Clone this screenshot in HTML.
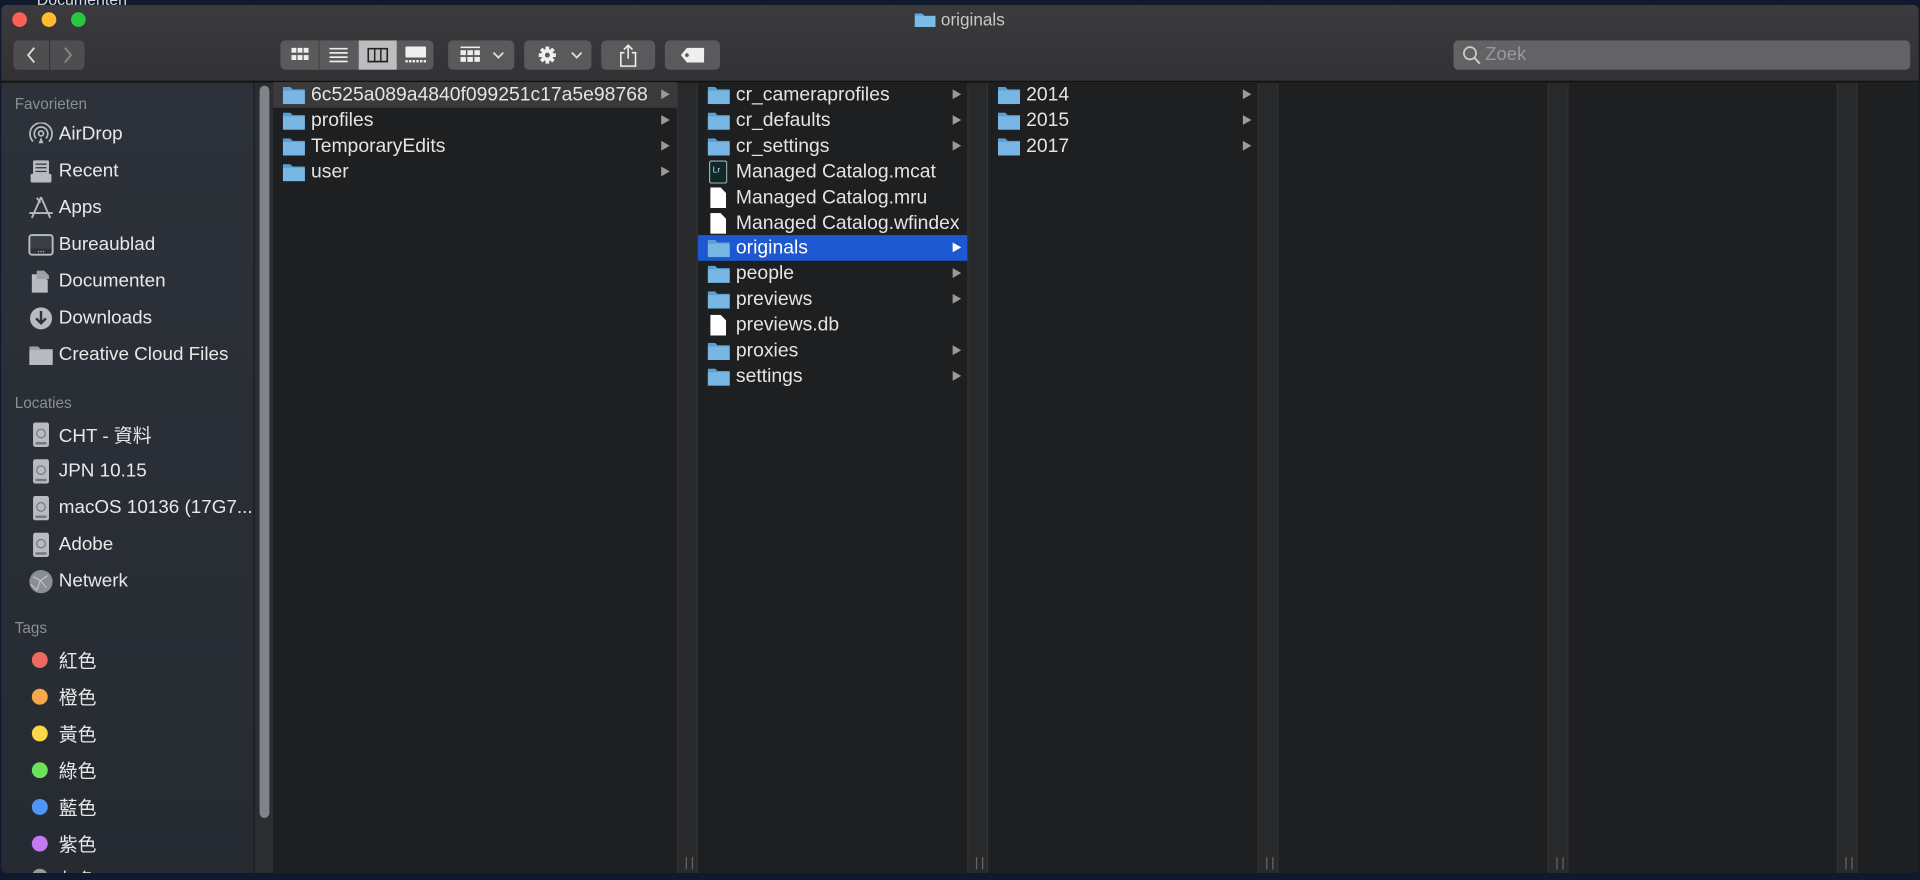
<!DOCTYPE html>
<html><head><meta charset="utf-8"><style>
*{margin:0;padding:0;box-sizing:border-box}
html,body{width:1920px;height:880px;overflow:hidden;background:#0f1a2e}
#w{position:absolute;left:0;top:0;width:1568px;height:719px;transform:scale(1.22449);transform-origin:0 0;font-family:"Liberation Sans","Noto Sans CJK TC",sans-serif;color:#dcdcdc}
.win{position:absolute;left:1px;top:4px;width:1566px;height:709px;background:#1e1f21;border-radius:5px;overflow:hidden}
.tb{position:absolute;left:0;top:0;width:100%;height:63px;background:linear-gradient(#3b3b3d,#323234);border-bottom:1px solid #111}
.tl{position:absolute;top:6px;width:12px;height:12px;border-radius:50%}
.title{position:absolute;left:0;right:0;top:4px;text-align:center;font-size:14px;color:#c8c8c8}
.btn{position:absolute;top:29px;height:24px;background:#5a5a5d;border-radius:4px}
.seg{position:absolute;top:0;height:24px}
.side{position:absolute;left:0;top:64px;width:207px;height:650px;background:linear-gradient(#2d323a,#262a31)}
.sh{position:absolute;left:11px;font-size:12.5px;color:#8a8e95}
.si{position:absolute;left:47px;font-size:15.4px;color:#e8e8e8;white-space:nowrap;transform:translateY(-50%)}
.ic{position:absolute;left:22px;width:21px;height:20px;transform:translateY(-50%)}
.dot{position:absolute;left:25px;width:13px;height:13px;border-radius:50%;transform:translateY(-50%)}
.sb{position:absolute;left:206px;top:64px;width:17px;height:650px;background:#2b2d31;border-left:1px solid #1a1a1a}
.thumb{position:absolute;left:4px;top:2px;width:8px;height:598px;border-radius:4px;background:#80848a}
.col{position:absolute;top:64px;height:650px;background:#1e1f21}
.gut{position:absolute;top:64px;height:650px;background:#28292b;border-left:1px solid #333;border-right:1px solid #333}
.gut:after{content:"";position:absolute;left:6px;bottom:8px;width:4px;height:10px;border-left:1px solid #666;border-right:1px solid #666}
.row{position:absolute;left:0;right:0;height:21px;font-size:15.8px;line-height:21px;color:#e4e4e4;white-space:nowrap}
.row .f{position:absolute;left:8px;top:4px;width:18px;height:14px}
.row .t{position:absolute;left:31px}
.row .a{position:absolute;right:6px;top:6px;width:0;height:0;border-left:7px solid #9a9a9a;border-top:4.5px solid transparent;border-bottom:4.5px solid transparent}
.doc{position:absolute;left:10px;top:2px;width:13px;height:17px;background:#fff;clip-path:polygon(0 0,65% 0,100% 28%,100% 100%,0 100%)}
.rows{position:absolute;left:0;right:0;top:-4px}
</style></head><body><div id="w">
<div style="position:absolute;left:30px;top:-8px;font-size:13px;color:#ddd">Documenten</div>
<div class="win">
<div class="tb">
<div class="tl" style="left:9px;background:#fe5f57"></div>
<div class="tl" style="left:33px;background:#febc2e"></div>
<div class="tl" style="left:57px;background:#28c840"></div>
<div class="title"><svg width="17" height="13" style="vertical-align:-1px;margin-right:4px"><path d="M0 2h6l2 2h9v9H0z" fill="#5fa8de"/><rect x="0" y="4" width="17" height="9" fill="#7bbbe8"/></svg>originals</div>
<div class="btn" style="left:10px;width:58px;background:#4e4e51"><div style="position:absolute;left:29px;top:0;width:1px;height:24px;background:#333"></div>
<svg style="position:absolute;left:9px;top:5px" width="12" height="14"><path d="M8 1 3 7l5 6" stroke="#ddd" stroke-width="1.5" fill="none"/></svg>
<svg style="position:absolute;left:38px;top:5px" width="12" height="14"><path d="M4 1l5 6-5 6" stroke="#888" stroke-width="1.5" fill="none"/></svg></div>
<div class="btn" style="left:228px;width:125px;overflow:hidden">
<div class="seg" style="left:64px;width:31px;background:#bdbdbf"></div>
<div class="seg" style="left:31px;width:1px;background:#444"></div>
<svg style="position:absolute;left:9px;top:6px" width="14" height="12" fill="#eee"><rect x="0" y="0" width="4" height="4"/><rect x="5" y="0" width="4" height="4"/><rect x="10" y="0" width="4" height="4"/><rect x="0" y="6" width="4" height="4"/><rect x="5" y="6" width="4" height="4"/><rect x="10" y="6" width="4" height="4"/></svg>
<svg style="position:absolute;left:40px;top:6px" width="15" height="12" fill="#eee"><rect y="0" width="15" height="1.4"/><rect y="3.5" width="15" height="1.4"/><rect y="7" width="15" height="1.4"/><rect y="10.5" width="15" height="1.4"/></svg>
<svg style="position:absolute;left:71px;top:6px" width="17" height="12"><rect x=".7" y=".7" width="15.6" height="10.6" fill="none" stroke="#222" stroke-width="1.4"/><path d="M6 1v10M11 1v10" stroke="#222" stroke-width="1.2"/></svg>
<svg style="position:absolute;left:102px;top:5px" width="17" height="14" fill="#eee"><rect width="17" height="9" rx="1"/><rect y="11" width="2" height="2"/><rect x="3" y="11" width="2" height="2"/><rect x="6" y="11" width="2" height="2"/><rect x="9" y="11" width="2" height="2"/><rect x="12" y="11" width="2" height="2"/><rect x="15" y="11" width="2" height="2"/></svg></div>
<div class="btn" style="left:365px;width:54px">
<svg style="position:absolute;left:10px;top:5px" width="16" height="14" fill="#eee"><rect width="16" height="1.3"/><rect y="3" width="4.5" height="4"/><rect x="5.7" y="3" width="4.5" height="4"/><rect x="11.4" y="3" width="4.5" height="4"/><rect y="8.5" width="4.5" height="4"/><rect x="5.7" y="8.5" width="4.5" height="4"/><rect x="11.4" y="8.5" width="4.5" height="4"/></svg>
<svg style="position:absolute;left:36px;top:9px" width="10" height="7"><path d="M1 1l4 4 4-4" stroke="#ddd" stroke-width="1.5" fill="none"/></svg></div>
<div class="btn" style="left:427px;width:55px">
<svg style="position:absolute;left:11px;top:4px" width="16" height="16"><g fill="#eee"><circle cx="8" cy="8" r="5"/><g stroke="#eee" stroke-width="3"><path d="M8 1v14M1 8h14M3 3l10 10M13 3 3 13"/></g></g><circle cx="8" cy="8" r="2" fill="#5a5a5d"/></svg>
<svg style="position:absolute;left:38px;top:9px" width="10" height="7"><path d="M1 1l4 4 4-4" stroke="#ddd" stroke-width="1.5" fill="none"/></svg></div>
<div class="btn" style="left:490px;width:44px">
<svg style="position:absolute;left:14px;top:3px" width="16" height="19"><path d="M5 7H2v11h12V7h-3M8 12V1M4.5 4.5 8 1l3.5 3.5" stroke="#eee" stroke-width="1.3" fill="none"/></svg></div>
<div class="btn" style="left:542px;width:45px">
<svg style="position:absolute;left:13px;top:6px" width="20" height="12"><path d="M5 0h14v12H5L0 6z" fill="#eee"/><circle cx="5" cy="6" r="1.5" fill="#5a5a5d"/></svg></div>
<div class="btn" style="left:1186px;width:373px;background:#636366">
<svg style="position:absolute;left:7px;top:4px" width="16" height="17"><circle cx="6.5" cy="6.5" r="5" stroke="#ccc" stroke-width="1.4" fill="none"/><path d="M10 10l4.5 5" stroke="#ccc" stroke-width="1.6"/></svg>
<span style="position:absolute;left:26px;top:3px;font-size:15px;color:#9a9a9d">Zoek</span></div>
</div>

<div class="side">
<div class="sh" style="top:10px">Favorieten</div>
<svg class="ic" style="top:42px" viewBox="0 0 21 20"><g fill="none" stroke="#b8bcc2" stroke-width="1.4"><circle cx="10.5" cy="9" r="2"/><path d="M6.5 13a5.5 5.5 0 1 1 8 0M4 15.5a9 9 0 1 1 13 0"/></g><path d="M8.5 17l2-5 2 5z" fill="#b8bcc2"/></svg>
<div class="si" style="top:42px">AirDrop</div>
<svg class="ic" style="top:72px" viewBox="0 0 21 20"><rect x="4" y="1" width="13" height="13" rx="1" fill="#b8bcc2"/><path d="M6 4h9M6 7h9M6 10h9" stroke="#333" stroke-width="1"/><rect x="2" y="12" width="17" height="7" rx="1" fill="#b8bcc2"/></svg>
<div class="si" style="top:72px">Recent</div>
<svg class="ic" style="top:102px" viewBox="0 0 21 20"><path d="M10.5 1 3 18M10.5 1l7.5 17M1 14h19M7 1.5l3 4" stroke="#b8bcc2" stroke-width="1.5" fill="none"/></svg>
<div class="si" style="top:102px">Apps</div>
<svg class="ic" style="top:132px" viewBox="0 0 21 20"><rect x="1" y="2" width="19" height="16" rx="2" fill="none" stroke="#b8bcc2" stroke-width="1.6"/><rect x="2" y="3" width="17" height="10" fill="#3a3f47"/><path d="M8 15.5h1M10 15.5h1M12 15.5h1" stroke="#b8bcc2"/></svg>
<div class="si" style="top:132px">Bureaublad</div>
<svg class="ic" style="top:162px" viewBox="0 0 21 20"><path d="M3 4h8l5 5v10H3z" fill="#b8bcc2"/><path d="M7 1h6l4 4v3H7z" fill="#9da1a8"/></svg>
<div class="si" style="top:162px">Documenten</div>
<svg class="ic" style="top:192px" viewBox="0 0 21 20"><circle cx="10.5" cy="10" r="9" fill="#b8bcc2"/><path d="M10.5 4v10M6.5 10l4 4 4-4" stroke="#333" stroke-width="2" fill="none"/></svg>
<div class="si" style="top:192px">Downloads</div>
<svg class="ic" style="top:222px" viewBox="0 0 21 20"><path d="M1 3h7l2 2h10v13H1z" fill="#9da1a8"/><rect x="1" y="6" width="19" height="12" fill="#b8bcc2"/></svg>
<div class="si" style="top:222px">Creative Cloud Files</div>
<div class="sh" style="top:254px">Locaties</div>
<div class="si" style="top:287px">CHT - 資料</div>
<div class="si" style="top:317px">JPN 10.15</div>
<div class="si" style="top:347px">macOS 10136 (17G7...</div>
<div class="si" style="top:377px">Adobe</div>
<svg class="ic" style="top:287px" viewBox="0 0 21 20"><rect x="4" y="0" width="13" height="20" rx="2" fill="#b8bcc2"/><circle cx="10.5" cy="9" r="3.5" fill="none" stroke="#777"/><rect x="6" y="16" width="9" height="2" fill="#777"/></svg>
<svg class="ic" style="top:317px" viewBox="0 0 21 20"><rect x="4" y="0" width="13" height="20" rx="2" fill="#b8bcc2"/><circle cx="10.5" cy="9" r="3.5" fill="none" stroke="#777"/><rect x="6" y="16" width="9" height="2" fill="#777"/></svg>
<svg class="ic" style="top:347px" viewBox="0 0 21 20"><rect x="4" y="0" width="13" height="20" rx="2" fill="#b8bcc2"/><circle cx="10.5" cy="9" r="3.5" fill="none" stroke="#777"/><rect x="6" y="16" width="9" height="2" fill="#777"/></svg>
<svg class="ic" style="top:377px" viewBox="0 0 21 20"><rect x="4" y="0" width="13" height="20" rx="2" fill="#b8bcc2"/><circle cx="10.5" cy="9" r="3.5" fill="none" stroke="#777"/><rect x="6" y="16" width="9" height="2" fill="#777"/></svg>
<svg class="ic" style="top:407px" viewBox="0 0 21 20"><circle cx="10.5" cy="10" r="9.5" fill="#8a8e95"/><path d="M4 6l6 3 6-4M10 9l-3 8M10 9l5 6M2 12l5 5" stroke="#ccc" stroke-width=".8" fill="none"/></svg>
<div class="si" style="top:407px">Netwerk</div>
<div class="sh" style="top:438px">Tags</div>
<div class="dot" style="top:471px;background:#ee6a5f"></div><div class="si" style="top:471px">紅色</div>
<div class="dot" style="top:501px;background:#f6a94a"></div><div class="si" style="top:501px">橙色</div>
<div class="dot" style="top:531px;background:#f8d74a"></div><div class="si" style="top:531px">黃色</div>
<div class="dot" style="top:561px;background:#6ee15c"></div><div class="si" style="top:561px">綠色</div>
<div class="dot" style="top:591px;background:#4f95f7"></div><div class="si" style="top:591px">藍色</div>
<div class="dot" style="top:621px;background:#c379f0"></div><div class="si" style="top:621px">紫色</div>
<div class="dot" style="top:648px;background:#999"></div><div class="si" style="top:650px">灰色</div>
</div>
<div class="sb"><div class="thumb"></div></div>

<svg width="0" height="0" style="position:absolute"><defs><symbol id="fd" viewBox="0 0 18 14"><path d="M0 0h6l2 2h10v12H0z" fill="#5a9fd4"/><rect y="3" width="18" height="11" fill="#78b6e4"/></symbol></defs></svg>

<div class="col" style="left:222px;width:330px"><div class="rows">
<div class="row" style="top:3px;background:#3a3a3c"><svg class="f"><use href="#fd"/></svg><span class="t">6c525a089a4840f099251c17a5e98768</span><i class="a"></i></div>
<div class="row" style="top:24px"><svg class="f"><use href="#fd"/></svg><span class="t">profiles</span><i class="a"></i></div>
<div class="row" style="top:45px"><svg class="f"><use href="#fd"/></svg><span class="t">TemporaryEdits</span><i class="a"></i></div>
<div class="row" style="top:66px"><svg class="f"><use href="#fd"/></svg><span class="t">user</span><i class="a"></i></div>
</div></div>
<div class="gut" style="left:552px;width:17px"></div>
<div class="col" style="left:569px;width:221px"><div class="rows">
<div class="row" style="top:3px"><svg class="f"><use href="#fd"/></svg><span class="t">cr_cameraprofiles</span><i class="a"></i></div>
<div class="row" style="top:24px"><svg class="f"><use href="#fd"/></svg><span class="t">cr_defaults</span><i class="a"></i></div>
<div class="row" style="top:45px"><svg class="f"><use href="#fd"/></svg><span class="t">cr_settings</span><i class="a"></i></div>
<div class="row" style="top:66px"><svg style="position:absolute;left:9px;top:1px" width="15" height="19"><rect x=".5" y=".5" width="14" height="18" rx="1.5" fill="#0f2a26" stroke="#9ab"/><text x="3" y="10" font-size="7" fill="#bde" font-family="Liberation Sans">Lr</text></svg><span class="t">Managed Catalog.mcat</span></div>
<div class="row" style="top:87px"><i class="doc"></i><span class="t">Managed Catalog.mru</span></div>
<div class="row" style="top:108px"><i class="doc"></i><span class="t">Managed Catalog.wfindex</span></div>
<div class="row" style="top:128px;background:#1d58d1;color:#fff"><svg class="f"><use href="#fd"/></svg><span class="t">originals</span><i class="a" style="border-left-color:#fff"></i></div>
<div class="row" style="top:149px"><svg class="f"><use href="#fd"/></svg><span class="t">people</span><i class="a"></i></div>
<div class="row" style="top:170px"><svg class="f"><use href="#fd"/></svg><span class="t">previews</span><i class="a"></i></div>
<div class="row" style="top:191px"><i class="doc"></i><span class="t">previews.db</span></div>
<div class="row" style="top:212px"><svg class="f"><use href="#fd"/></svg><span class="t">proxies</span><i class="a"></i></div>
<div class="row" style="top:233px"><svg class="f"><use href="#fd"/></svg><span class="t">settings</span><i class="a"></i></div>
</div></div>
<div class="gut" style="left:789px;width:17px"></div>
<div class="col" style="left:806px;width:221px"><div class="rows">
<div class="row" style="top:3px"><svg class="f"><use href="#fd"/></svg><span class="t">2014</span><i class="a"></i></div>
<div class="row" style="top:24px"><svg class="f"><use href="#fd"/></svg><span class="t">2015</span><i class="a"></i></div>
<div class="row" style="top:45px"><svg class="f"><use href="#fd"/></svg><span class="t">2017</span><i class="a"></i></div>
</div></div>
<div class="gut" style="left:1026px;width:17px"></div>
<div class="gut" style="left:1263px;width:17px"></div>
<div class="gut" style="left:1499px;width:17px"></div>
</div>
</div></body></html>
